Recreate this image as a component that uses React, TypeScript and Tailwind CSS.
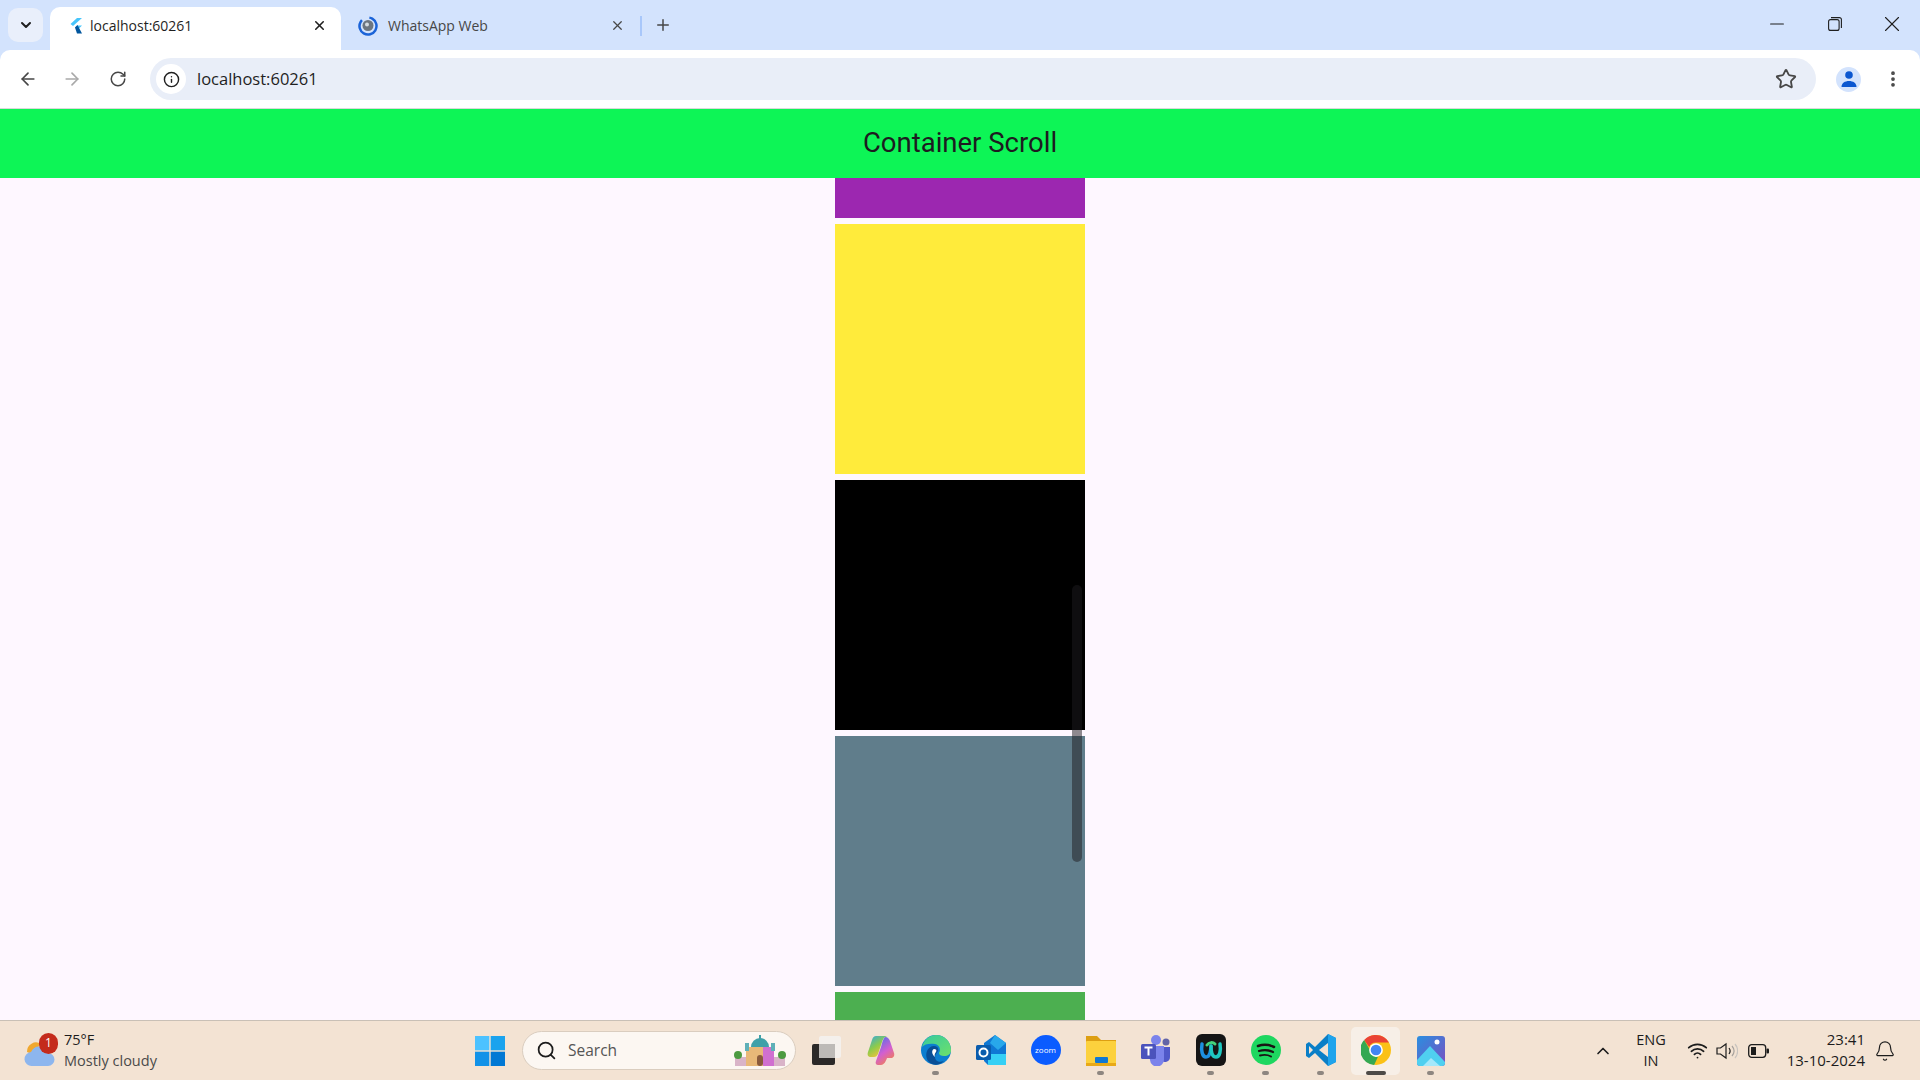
import React from 'react';
import { ArrowLeft, ArrowRight, ChevronDown, ChevronUp, Info, Minus, MoreVertical, Plus, RotateCw, Search, Star, Wifi, X, Bell } from 'lucide-react';

const ui = { fontFamily: '"Open Sans", "Noto Sans", sans-serif' };

// small app icons for the taskbar
const TaskView = () => (
  <svg width="30" height="32" viewBox="0 0 30 32">
    <rect x="1" y="10" width="23" height="21" rx="2" fill="#2b2928" />
    <rect x="8" y="2" width="22" height="22" rx="2" fill="#f4f1ee" opacity="0.9" />
    <rect x="8" y="10" width="16" height="14" fill="#bdbab7" />
  </svg>
);
const Copilot = () => (
  <svg width="28" height="32" viewBox="0 0 28 32">
    <defs>
      <linearGradient id="cpa" x1="0" y1="0" x2="0.6" y2="1"><stop offset="0" stopColor="#2fa8e8" /><stop offset="0.55" stopColor="#8ecb4a" /><stop offset="1" stopColor="#f7c23c" /></linearGradient>
      <linearGradient id="cpb" x1="0.3" y1="0" x2="0.8" y2="1"><stop offset="0" stopColor="#5a6ee8" /><stop offset="0.5" stopColor="#d35fd0" /><stop offset="1" stopColor="#f6843c" /></linearGradient>
    </defs>
    <path d="M9 2h11c-3 1-4 3-5 6l-4 12c-1 2-2 3-4 3H4c-3 0-4-2-3-5L5 6c1-3 2-4 4-4z" fill="url(#cpa)" />
    <path d="M18 3c3 0 4 2 5 4l4 12c1 3-1 5-3 5h-4c-1 3-3 7-6 7h-3c-2 0-3-2-2-4l5-14c1-4 2-8 4-10z" fill="url(#cpb)" />
  </svg>
);
const Edge = () => (
  <svg width="30" height="30" viewBox="0 0 30 30">
    <defs>
      <linearGradient id="eda" x1="0" y1="0" x2="1" y2="1"><stop offset="0" stopColor="#36c9a0" /><stop offset="1" stopColor="#6ee06a" /></linearGradient>
    </defs>
    <circle cx="15" cy="15" r="15" fill="#0c7ed0" />
    <path d="M1 12C3 4 9 0 15 0c9 0 15 7 15 15 0 4-3 6-7 6-3 0-5-1-5-3 2-3 1-8-4-9C9 8 3 9 1 12z" fill="url(#eda)" />
    <path d="M11 29c-5-2-7-8-5-13 1-3 4-5 7-5 3 0 5 2 4 5-1 2-3 3-3 6 0 4 4 6 9 4-3 3-8 5-12 3z" fill="#0a4f96" />
    <path d="M13 14c2 0 3 1 2 3-1 1-2 3-1 5-3-2-4-7-1-8z" fill="#fff" />
  </svg>
);
const Outlook = () => (
  <svg width="30" height="32" viewBox="0 0 30 32">
    <path d="M8 9 19 1l11 8v22H12l-4-4z" fill="#0f78d4" />
    <path d="M12 20h18v11H12z" fill="#36d0f5" />
    <path d="M19 1l11 8-8 7-8-7z" fill="#28a8ea" />
    <rect x="0" y="11" width="15" height="15" rx="1.5" fill="#0a5cad" />
    <circle cx="7.5" cy="18.5" r="4" fill="none" stroke="#fff" strokeWidth="2" />
  </svg>
);
const Zoom = () => (
  <div className="w-[30px] h-[30px] rounded-full bg-[#0b5cff] flex items-center justify-center text-white text-[8px]" style={ui}>zoom</div>
);
const Files = () => (
  <svg width="30" height="32" viewBox="0 0 30 32">
    <path d="M0 2h11l4 4h15v4H0z" fill="#dd9f12" />
    <rect x="0" y="7" width="30" height="25" rx="1" fill="#fcd13d" />
    <rect x="9" y="23" width="13" height="6" rx="1" fill="#0f78d4" />
    <rect x="0" y="29" width="30" height="3" fill="#e8a917" />
  </svg>
);
const Teams = () => (
  <svg width="30" height="32" viewBox="0 0 30 32">
    <circle cx="25" cy="8" r="3.5" fill="#6264a7" />
    <circle cx="15" cy="6" r="5" fill="#7b83eb" />
    <path d="M20 13h9v10a5 5 0 0 1-9 3z" fill="#5059c9" />
    <path d="M7 12h16v13a7 7 0 0 1-14 1z" fill="#7b83eb" />
    <rect x="0" y="10" width="15" height="15" rx="1.5" fill="#4b53bc" />
    <path d="M3.5 13.5h8M7.5 13.5v8" stroke="#fff" strokeWidth="2" />
  </svg>
);
const Wave = () => (
  <div className="w-[30px] h-[32px] rounded-[6px] bg-[#151515] flex items-center justify-center">
    <svg width="24" height="20" viewBox="0 0 24 20" fill="none">
      <path d="M3 4c-1 6 0 13 4 13s5-7 5-11" stroke="#1d8fe0" strokeWidth="3.5" strokeLinecap="round" />
      <path d="M12 6c0 5 1 11 5 11s5-7 4-13" stroke="#1ec8c0" strokeWidth="3.5" strokeLinecap="round" />
      <path d="M8 5c2-3 6-3 8-1" stroke="#45d27a" strokeWidth="3" strokeLinecap="round" />
    </svg>
  </div>
);
const Spotify = () => (
  <svg width="30" height="30" viewBox="0 0 30 30" fill="none">
    <circle cx="15" cy="15" r="15" fill="#1ed760" />
    <path d="M7 11c6-2 11-1.500 16 1" stroke="#191414" strokeWidth="2.600" strokeLinecap="round" />
    <path d="M8 16c5-1.500 10-1 14 1" stroke="#191414" strokeWidth="2.200" strokeLinecap="round" />
    <path d="M9 20.500c4-1 8-.7 11 1" stroke="#191414" strokeWidth="1.900" strokeLinecap="round" />
  </svg>
);
const VsCode = () => (
  <svg width="30" height="32" viewBox="0 0 30 32">
    <path d="M22 0l8 4v24l-8 4L9 19 3 24l-3-2v-12l3-2 6 5z" fill="#0a7fc7" />
    <path d="M22 0l8 4v24l-8 4z" fill="#1fa4ec" />
    <path d="M22 9v14l-9-7z" fill="#f3e3d3" />
    <path d="M3 12l4 4-4 4z" fill="#f3e3d3" />
  </svg>
);
const Chrome = () => (
  <svg width="30" height="30" viewBox="0 0 48 48">
    <circle cx="24" cy="24" r="24" fill="#fbc116" />
    <path d="M24 0a24 24 0 0 1 20.800 12H24a12 12 0 0 0-11 7L5 8A24 24 0 0 1 24 0z" fill="#ea4335" />
    <path d="M5 8l10 17a12 12 0 0 0 12 10l-6 13A24 24 0 0 1 5 8z" fill="#34a853" />
    <circle cx="24" cy="24" r="11" fill="#fff" />
    <circle cx="24" cy="24" r="8.500" fill="#4285f4" />
  </svg>
);
const Photos = () => (
  <svg width="28" height="32" viewBox="0 0 28 32">
    <defs>
      <linearGradient id="pha" x1="0" y1="0" x2="1" y2="1"><stop offset="0" stopColor="#2a8fe0" /><stop offset="1" stopColor="#7b4fc0" /></linearGradient>
    </defs>
    <rect x="0" y="2" width="28" height="30" rx="3" fill="url(#pha)" />
    <circle cx="20" cy="8" r="2.500" fill="#fff" />
    <path d="M0 26l13-14 15 16v1a3 3 0 0 1-3 3H3a3 3 0 0 1-3-3z" fill="#4fd0f0" />
    <path d="M6 32l8-8 9 8z" fill="#a5e8fa" />
  </svg>
);

const taskbarApps = [
  { id: 'task', icon: <TaskView />, open: false },
  { id: 'copilot', icon: <Copilot />, open: false },
  { id: 'edge', icon: <Edge />, open: true },
  { id: 'outlook', icon: <Outlook />, open: false },
  { id: 'zoom', icon: <Zoom />, open: false },
  { id: 'files', icon: <Files />, open: true },
  { id: 'teams', icon: <Teams />, open: false },
  { id: 'wave', icon: <Wave />, open: true },
  { id: 'spotify', icon: <Spotify />, open: true },
  { id: 'vscode', icon: <VsCode />, open: true },
  { id: 'chrome', icon: <Chrome />, open: true, active: true },
  { id: 'photos', icon: <Photos />, open: true },
];

export default function App() {
  return (
    <div className="h-screen w-full flex flex-col overflow-hidden bg-[#fef7ff]" style={ui}>
      {/* Tab strip */}
      <div className="h-[50px] shrink-0 bg-[#d3e3fd] flex items-end pl-[8px]">
        <div className="w-[35px] h-[34px] mb-[8px] rounded-[10px] bg-[#e9effb] flex items-center justify-center">
          <ChevronDown size={16} strokeWidth={3} className="text-[#1f1f1f]" />
        </div>
        <div className="ml-[7px] w-[291px] h-[43px] bg-white rounded-t-[10px] flex items-center pl-[20px] pr-[14px] pb-[6px] text-[14px] text-[#1f1f1f]">
          <svg width="12" height="16" viewBox="0 0 12 16" className="mr-[8px]">
            <path d="M7 0h5L3 8 .500 6z" fill="#47c5fb" />
            <path d="M7 7.500h5L7.500 12 5 9.500z" fill="#47c5fb" />
            <path d="M5 9.500 7.500 7l4.500 8.500H7z" fill="#00569e" />
          </svg>
          <span className="flex-1">localhost:60261</span>
          <X size={15} strokeWidth={2.5} />
        </div>
        <div className="w-[298px] h-[43px] flex items-center pl-[19px] pr-[14px] pb-[6px] text-[14px] text-[#474747]">
          <svg width="20" height="20" viewBox="0 0 20 20" className="mr-[10px] -ml-[2px]">
            <circle cx="10" cy="10" r="8.500" fill="none" stroke="#1a63d8" strokeWidth="2.500" strokeDasharray="42 8" transform="rotate(-60 10 10)" />
            <circle cx="10" cy="9.500" r="5.500" fill="#6d7680" />
            <circle cx="9" cy="8.500" r="2" fill="#d5dbe0" />
          </svg>
          <span className="flex-1">WhatsApp Web</span>
          <X size={15} strokeWidth={2} />
        </div>
        <div className="w-[2px] h-[20px] mb-[14px] ml-[1px] bg-[#a8c7fa]" />
        <Plus size={18} strokeWidth={2} className="ml-[12px] mb-[16px] text-[#474747]" />
        <div className="flex-1 self-stretch flex items-start justify-end text-[#1f1f1f]">
          <div className="w-[58px] h-[48px] flex items-center justify-center"><Minus size={22} strokeWidth={1.1} /></div>
          <div className="w-[57px] h-[48px] flex items-center justify-center">
            <svg width="14" height="14" viewBox="0 0 14 14" fill="none" stroke="currentColor" strokeWidth="1.100">
              <rect x="0.600" y="2.600" width="10.500" height="10.800" rx="2" />
              <path d="M3 .600h8.400a2 2 0 0 1 2 2V11" />
            </svg>
          </div>
          <div className="w-[57px] h-[48px] flex items-center justify-center"><X size={26} strokeWidth={1} /></div>
        </div>
      </div>

      {/* Toolbar */}
      <div className="h-[59px] shrink-0 bg-[#d3e3fd]">
        <div className="h-full bg-white rounded-t-[10px] border-b border-[#d9d9d9] flex items-center pl-[18px] pr-[17px] text-[#474747]">
          <ArrowLeft size={20} strokeWidth={2} />
          <ArrowRight size={20} strokeWidth={2} className="ml-[24px] text-[#a9a9a9]" />
          <RotateCw size={18} strokeWidth={2} className="ml-[27px]" />
          <div className="ml-[23px] flex-1 h-[42px] rounded-full bg-[#e9eef8] flex items-center pl-[6px] pr-[19px]">
            <div className="w-[30px] h-[30px] rounded-full bg-white flex items-center justify-center text-[#1f1f1f]">
              <Info size={17} strokeWidth={2} />
            </div>
            <span className="ml-[11px] flex-1 text-[16.5px] text-[#1f1f1f]">localhost:60261</span>
            <Star size={22} strokeWidth={2} />
          </div>
          <div className="ml-[20px] w-[25px] h-[25px] rounded-full bg-[#d3e3fd] flex items-center justify-center overflow-hidden">
            <svg width="18" height="18" viewBox="0 0 18 18" fill="#0b57d0">
              <circle cx="9" cy="5" r="3.800" />
              <path d="M1.500 17c0-4 3.400-6 7.500-6s7.500 2 7.500 6z" />
            </svg>
          </div>
          <MoreVertical size={20} strokeWidth={2.5} className="ml-[22px]" />
        </div>
      </div>

      {/* App bar */}
      <div className="h-[69px] shrink-0 bg-[#0df556] flex items-center justify-center pb-[2px]">
        <span className="text-[27.5px] text-[#1d1b20]" style={{ fontFamily: 'Roboto, sans-serif' }}>Container Scroll</span>
      </div>

      {/* Scrolled container */}
      <div className="flex-1 min-h-0 overflow-hidden flex justify-center">
        <div className="relative w-[250px] flex flex-col gap-[6px]">
          <div className="h-[39.5px] shrink-0 bg-[#9c27b0]" />
          <div className="h-[250px] shrink-0 bg-[#ffeb3b]" />
          <div className="h-[250px] shrink-0 bg-black" />
          <div className="h-[250px] shrink-0 bg-[#607d8b]" />
          <div className="h-[250px] shrink-0 bg-[#4caf50]" />
          {/* overlay scrollbar */}
          <div className="absolute left-[237px] top-[407px] w-[10px] h-[277px] rounded-full bg-[#1d1b20]/50" />
        </div>
      </div>

      {/* Windows taskbar */}
      <div className="h-[60px] shrink-0 bg-[#f3e3d3] border-t border-[#c9c0b6] flex items-center relative text-[#1c1c1c]">
        <div className="w-[475px] shrink-0 flex items-center pl-[24px]">
          <div className="relative w-[40px] h-[36px] shrink-0">
            <svg width="32" height="30" viewBox="0 0 32 30" className="absolute left-0 top-[5px]">
              <path d="M3 14a9 9 0 0 1 14-8L8 16z" fill="#f0a830" />
              <path d="M8 28a7 7 0 0 1-1-14 9 9 0 0 1 17 1 6.500 6.500 0 0 1 0 13z" fill="#8db6ee" />
            </svg>
            <div className="absolute left-[15px] top-0 w-[19px] h-[21px] rounded-full bg-[#c42b1c] text-white text-[12px] flex items-center justify-center">1</div>
          </div>
          <div className="flex flex-col pb-[2px] text-[14.5px] leading-[21px]">
            <span>75°F</span>
            <span className="text-[#4a4a4a]">Mostly cloudy</span>
          </div>
        </div>

        <svg width="30" height="30" viewBox="0 0 30 30" className="shrink-0">
          <rect x="0" y="0" width="14.300" height="14.300" fill="#4cc2ff" />
          <rect x="15.700" y="0" width="14.300" height="14.300" fill="#1aa3ee" />
          <rect x="0" y="15.700" width="14.300" height="14.300" fill="#1192e8" />
          <rect x="15.700" y="15.700" width="14.300" height="14.300" fill="#0078d4" />
        </svg>

        <div className="ml-[17px] w-[274px] h-[39px] shrink-0 rounded-full bg-[#fcf7f2] border border-[#dacdbf] flex items-center pl-[13px] pr-[8px]">
          <Search size={21} strokeWidth={2} className="text-[#1c1c1c]" />
          <span className="ml-[11px] flex-1 text-[15.5px] text-[#555]">Search</span>
          <svg width="54" height="36" viewBox="0 0 54 36">
            <rect x="2" y="24" width="50" height="9" fill="#d9b4c8" />
            <circle cx="5" cy="22" r="4" fill="#4c9a40" />
            <circle cx="49" cy="22" r="4" fill="#4c9a40" />
            <rect x="13" y="14" width="28" height="19" fill="#e8b878" />
            <rect x="30" y="14" width="11" height="19" fill="#d070d0" />
            <path d="M18 14a9 9 0 0 1 18 0z" fill="#3fa0a8" />
            <rect x="26" y="2" width="2" height="5" fill="#3fa0a8" />
            <rect x="12" y="10" width="4" height="8" fill="#5fb0b8" />
            <rect x="38" y="10" width="4" height="8" fill="#5fb0b8" />
            <rect x="24" y="22" width="6" height="11" rx="3" fill="#8a5a3c" />
          </svg>
        </div>

        <div className="ml-[2px] flex items-center">
          {taskbarApps.map(app => (
            <div key={app.id} className="relative w-[55px] h-[48px] pb-[2px] flex items-center justify-center">
              {app.active && <div className="absolute inset-y-0 left-[3px] right-[3px] rounded-[5px] bg-[#f7efe7]" />}
              <div className="relative flex">{app.icon}</div>
              {app.open && (
                <div className={`absolute bottom-[0px] h-[4px] rounded-full ${app.active ? 'w-[20px] bg-[#4d4a47]' : 'w-[7px] bg-[#8d8680]'}`} />
              )}
            </div>
          ))}
        </div>

        <div className="flex-1 flex items-center justify-end pr-[24px]">
          <ChevronUp size={20} strokeWidth={2} />
          <div className="ml-[23px] pb-[2px] flex flex-col items-center text-[14.5px] leading-[21px]">
            <span>ENG</span>
            <span>IN</span>
          </div>
          <Wifi size={21} strokeWidth={2} className="ml-[21px]" />
          <svg width="22" height="18" viewBox="0 0 22 18" fill="none" stroke="#1c1c1c" strokeWidth="1.200" className="ml-[8px]">
            <path d="M1 6v6h3.500L10 16V2L4.500 6z" />
            <path d="M13 6c1.500 2 1.500 4 0 6" />
            <path d="M16 4c2.500 3 2.500 7 0 10" stroke="#a8a39e" />
            <path d="M19 2c3.500 4 3.500 10 0 14" stroke="#c9c4bf" />
          </svg>
          <svg width="21" height="14" viewBox="0 0 21 14" className="ml-[10px]">
            <rect x="0.700" y="0.700" width="17" height="12.600" rx="3" fill="none" stroke="#1c1c1c" strokeWidth="1.300" />
            <rect x="3" y="3" width="5" height="8" fill="#1c1c1c" />
            <rect x="18.500" y="4.500" width="2.500" height="5" rx="1" fill="#1c1c1c" />
          </svg>
          <div className="ml-[18px] pb-[2px] flex flex-col items-end text-[15px] leading-[21px]">
            <span>23:41</span>
            <span>13-10-2024</span>
          </div>
          <Bell size={22} strokeWidth={1.3} className="ml-[9px]" />
        </div>
      </div>
    </div>
  );
}
